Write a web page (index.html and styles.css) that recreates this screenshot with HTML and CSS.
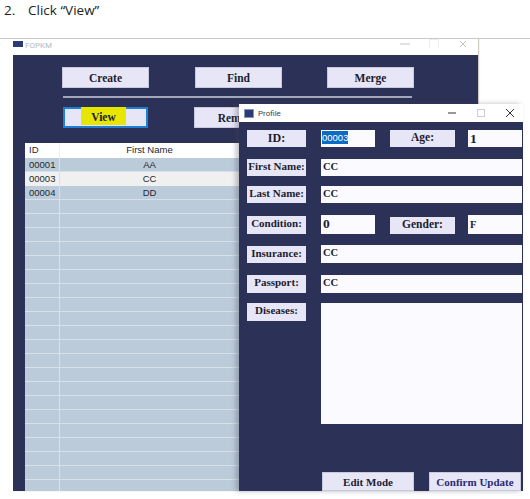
FILE: index.html
```html
<html>
    <head>
        <title>Click View</title>
        <link rel="stylesheet" href="styles.css">
    </head>
    <body>
        <p class="step"><span class="step-num">2.</span>Click “View”</p>
        <div class="rule"></div>

        <div class="window main-window">
            <div class="titlebar main-titlebar">
                <span class="app-icon small-icon"></span>
                <span class="title-text faded">FOPKM</span>
                <span class="controls faded-controls">
                    <svg width="10" height="10" viewBox="0 0 10 10"><path d="M0 5H10" /></svg>
                    <svg class="dim" width="10" height="10" viewBox="0 0 10 10"><rect x="0.5" y="0.5" width="9" height="9" /></svg>
                    <svg width="10" height="10" viewBox="0 0 10 10"><path d="M2 2L8 8M8 2L2 8" /></svg>
                </span>
            </div>
            <div class="main-body">
                <div class="btn-row">
                    <div class="btn">Create</div>
                    <div class="btn">Find</div>
                    <div class="btn">Merge</div>
                </div>
                <div class="separator"></div>
                <div class="btn-row">
                    <div class="btn btn-focus"><span class="highlight">View</span></div>
                    <div class="btn">Remove</div>
                </div>
                <div class="table">
                    <div class="tr th"><div class="td id-col">ID</div><div class="td name-col">First Name</div><div class="td"></div></div>
                    <div class="tr"><div class="td id-col">00001</div><div class="td name-col">AA</div><div class="td"></div></div>
                    <div class="tr selected"><div class="td id-col">00003</div><div class="td name-col">CC</div><div class="td"></div></div>
                    <div class="tr"><div class="td id-col">00004</div><div class="td name-col">DD</div><div class="td"></div></div>
                    <div class="tr"><div class="td id-col"></div></div>
                    <div class="tr"><div class="td id-col"></div></div>
                    <div class="tr"><div class="td id-col"></div></div>
                    <div class="tr"><div class="td id-col"></div></div>
                    <div class="tr"><div class="td id-col"></div></div>
                    <div class="tr"><div class="td id-col"></div></div>
                    <div class="tr"><div class="td id-col"></div></div>
                    <div class="tr"><div class="td id-col"></div></div>
                    <div class="tr"><div class="td id-col"></div></div>
                    <div class="tr"><div class="td id-col"></div></div>
                    <div class="tr"><div class="td id-col"></div></div>
                    <div class="tr"><div class="td id-col"></div></div>
                    <div class="tr"><div class="td id-col"></div></div>
                    <div class="tr"><div class="td id-col"></div></div>
                    <div class="tr"><div class="td id-col"></div></div>
                    <div class="tr"><div class="td id-col"></div></div>
                    <div class="tr"><div class="td id-col"></div></div>
                    <div class="tr"><div class="td id-col"></div></div>
                    <div class="tr"><div class="td id-col"></div></div>
                    <div class="tr"><div class="td id-col"></div></div>
                    <div class="tr"><div class="td id-col"></div></div>
                </div>
            </div>
        </div>

        <div class="window profile-window">
            <div class="titlebar profile-titlebar">
                <span class="app-icon"></span>
                <span class="title-text">Profile</span>
                <span class="controls">
                    <svg width="10" height="10" viewBox="0 0 10 10"><path d="M1 5H9" /></svg>
                    <svg class="dim" width="10" height="10" viewBox="0 0 10 10"><rect x="1.5" y="1.5" width="7" height="7" /></svg>
                    <svg width="10" height="10" viewBox="0 0 10 10"><path d="M1 1L9 9M9 1L1 9" /></svg>
                </span>
            </div>
            <div class="form">
                <div class="row gap-lg">
                    <div class="label label-big">ID:</div>
                    <div class="field short sans"><span class="selected-text">00003</span></div>
                    <div class="label label-mid">Age:</div>
                    <div class="field short big-value">1</div>
                </div>
                <div class="row">
                    <div class="label">First Name:</div>
                    <div class="field wide">CC</div>
                </div>
                <div class="row gap-lg">
                    <div class="label">Last Name:</div>
                    <div class="field wide">CC</div>
                </div>
                <div class="row row-tall gap-md">
                    <div class="label label-tall">Condition:</div>
                    <div class="field short big-value">0</div>
                    <div class="label label-mid">Gender:</div>
                    <div class="field short tall-value">F</div>
                </div>
                <div class="row row-mid gap-lg">
                    <div class="label">Insurance:</div>
                    <div class="field wide">CC</div>
                </div>
                <div class="row row-mid">
                    <div class="label label-tall">Passport:</div>
                    <div class="field wide">CC</div>
                </div>
                <div class="row row-area">
                    <div class="label label-tall">Diseases:</div>
                    <div class="field wide"></div>
                </div>
                <div class="row row-actions">
                    <div class="btn action">Edit Mode</div>
                    <div class="btn action confirm">Confirm Update</div>
                </div>
            </div>
        </div>
    </body>
</html>
```

FILE: styles.css
```css
html, body {
    margin: 0;
    height: 499px;
    overflow: hidden;
}

body {
    position: relative;
    background-color: #ffffff;
    font-family: "Liberation Serif", serif;
}

.step {
    margin: 0;
    height: 38px;
    padding-left: 4px;
    font-family: "Open Sans", sans-serif;
    font-size: 13.5px;
    line-height: 20px;
    color: #222222;
}

.step-num {
    display: inline-block;
    width: 24px;
}

.rule {
    height: 1px;
    background-color: #c8c8c8;
}

.window {
    background-color: #2c3157;
}

.titlebar {
    display: flex;
    align-items: center;
    background-color: #ffffff;
}

.main-window {
    width: 465px;
    height: 452px;
    margin-left: 13px;
    box-shadow: 1px 0 1px #cfc9c4;
    overflow: hidden;
}

.main-titlebar {
    height: 16px;
}

.app-icon {
    width: 10px;
    height: 9px;
    margin-right: 4px;
    background-color: #2c3a75;
    border: 1px solid #8a93b8;
    box-sizing: border-box;
}

.small-icon {
    height: 6px;
    margin-right: 2px;
    margin-bottom: 6px;
    border: none;
}

.title-text {
    font-family: Roboto, sans-serif;
    font-size: 8px;
    color: #444444;
}

.faded {
    margin-bottom: 4px;
    color: #b5b8c4;
}

.controls {
    display: flex;
    margin-left: auto;
    gap: 19px;
    padding-right: 8px;
}

.controls svg {
    fill: none;
    stroke: #333333;
    stroke-width: 1;
}

.controls .dim {
    stroke: #cccccc;
}

.faded-controls {
    align-self: flex-start;
    height: 9px;
    overflow: hidden;
    padding-right: 10px;
}

.faded-controls svg {
    stroke: #c4c4c4;
}

.faded-controls .dim {
    stroke: #eeeeee;
}

.main-body {
    padding-top: 12px;
}

.btn-row {
    display: flex;
    gap: 45px;
    padding-left: 49px;
}

.btn-row .btn:first-child {
    margin-right: 1px;
}

.btn {
    display: flex;
    align-items: center;
    justify-content: center;
    box-sizing: border-box;
    width: 87px;
    height: 21px;
    background-color: #e6e6f7;
    border: 1px solid #c9c9de;
    font-size: 11.5px;
    font-weight: bold;
    color: #1c1c2e;
}

.btn-row .btn-focus {
    justify-content: flex-start;
    width: 85px;
    margin-left: 1px;
    margin-right: 2px;
    border: 2px solid #1f7fd6;
}

.highlight {
    align-self: flex-start;
    width: 45px;
    height: 18px;
    margin-top: -2px;
    margin-left: 16px;
    line-height: 20px;
    text-align: center;
    background-color: #e6e600;
}

.separator {
    width: 349px;
    height: 2px;
    margin: 8px 0 9px 50px;
    background-color: #a4a6ba;
}

.table {
    width: 442px;
    margin: 15px 0 0 12px;
    background-color: #bccbda;
    font-family: "Liberation Sans", sans-serif;
    font-size: 9.5px;
    color: #23282f;
}

.tr {
    display: flex;
    box-sizing: border-box;
    height: 14px;
    border-bottom: 1px solid #d7e1eb;
}

.th {
    height: 15px;
    background-color: #ffffff;
    border-bottom: none;
}

.selected {
    background-color: #f0f0f0;
    border-bottom: none;
}

.td {
    line-height: 14px;
}

.id-col {
    box-sizing: border-box;
    width: 35px;
    padding-left: 4px;
    border-right: 1px solid #d7e1eb;
}

.th .id-col {
    border-right-color: #eeeeee;
}

.name-col {
    width: 179px;
    text-align: center;
}

.profile-window {
    position: absolute;
    left: 239px;
    top: 104px;
    width: 284px;
    height: 387px;
    box-shadow: -3px 0 5px rgba(70, 70, 90, 0.35);
}

.profile-titlebar {
    height: 18px;
    padding-left: 5px;
}

.form {
    display: flex;
    flex-direction: column;
    padding: 8px 1px 0 8px;
}

.row {
    display: flex;
    align-items: flex-end;
    height: 17px;
    margin-bottom: 10px;
}

.gap-lg {
    margin-bottom: 12px;
}

.gap-md {
    margin-bottom: 11px;
}

.row-tall {
    height: 19px;
}

.row-mid {
    height: 18px;
}

.row-area {
    height: 121px;
    margin-bottom: 48px;
    align-items: flex-start;
}

.row-actions {
    height: 19px;
    margin-bottom: 0;
    padding-left: 75px;
    gap: 15px;
}

.label {
    flex: none;
    width: 59px;
    height: 17px;
    margin-right: 15px;
    background-color: #e6e6f7;
    font-size: 11px;
    font-weight: bold;
    line-height: 15px;
    text-align: center;
    color: #1c1c2e;
    white-space: nowrap;
}

.label-big {
    font-size: 12px;
    line-height: 16px;
}

.label-mid {
    width: 65px;
    margin-right: 13px;
    font-size: 11.5px;
}

.label-tall {
    height: 18px;
}

.field {
    box-sizing: border-box;
    height: 100%;
    padding-left: 2px;
    background-color: #fafaff;
    font-size: 10.5px;
    font-weight: bold;
    line-height: 15px;
    color: #1c1c2e;
}

.short {
    flex: none;
    width: 54px;
    margin-right: 15px;
}

.short:last-child {
    margin-right: 0;
}

.wide {
    width: 201px;
}

.sans {
    padding-left: 1px;
    font-family: "Liberation Sans", sans-serif;
    font-size: 9.5px;
    font-weight: normal;
}

.selected-text {
    display: inline-block;
    height: 13px;
    margin-top: 1px;
    line-height: 13px;
    background-color: #0a6cc4;
    color: #ffffff;
}

.big-value {
    padding-left: 2px;
    font-size: 13.5px;
    line-height: 17px;
}

.tall-value {
    line-height: 19px;
}

.action {
    width: 92px;
    height: 19px;
    font-size: 11px;
}

.confirm {
    color: #2a2a78;
}
```
